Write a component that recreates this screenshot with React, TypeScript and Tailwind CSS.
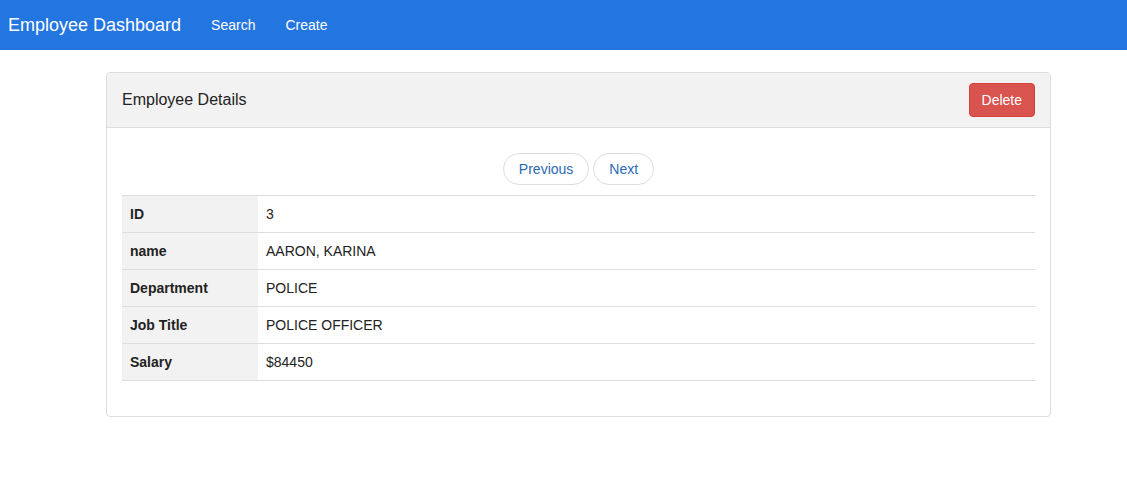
import React from 'react';

const rows: [string, string][] = [
  ['ID', '3'],
  ['name', 'AARON, KARINA'],
  ['Department', 'POLICE'],
  ['Job Title', 'POLICE OFFICER'],
  ['Salary', '$84450'],
];

export default function App() {
  return (
    <div className="min-h-screen bg-white text-[14px] text-[#333]" style={{ fontFamily: '"Liberation Sans", Arial, sans-serif' }}>
      {/* navbar */}
      <nav className="h-[50px] bg-[#2375e0] flex items-center text-white">
        <a className="ml-[8px] text-[18px] leading-[20px]">Employee Dashboard</a>
        <a className="ml-[30px] leading-[20px]">Search</a>
        <a className="ml-[30px] leading-[20px]">Create</a>
      </nav>

      <div className="ml-[106px] w-[945px] mt-[22px] border border-[#ddd] rounded-[4px]">
        <div className="h-[55px] bg-[#f2f2f2] border-b border-[#ddd] rounded-t-[4px] flex items-center justify-between pl-[15px] pr-[15px]">
          <h3 className="text-[16px] text-[#222]">Employee Details</h3>
          <button className="h-[34px] px-[12px] bg-[#d9534f] border border-[#d43f3a] rounded-[4px] text-white">Delete</button>
        </div>
        <div className="p-[15px] pt-[25px]">
          <div className="flex justify-center gap-[4px] mb-[10px]">
            <button className="h-[32px] px-[15px] border border-[#ddd] rounded-full text-[#2a6ab5]">Previous</button>
            <button className="h-[32px] px-[15px] border border-[#ddd] rounded-full text-[#2a6ab5]">Next</button>
          </div>
          <table className="w-full border-collapse mb-[20px]">
            <tbody>
              {rows.map(([k, v]) => (
                <tr key={k} className="border-t border-b border-[#ddd]">
                  <th className="w-[136px] bg-[#f2f2f2] text-left font-bold h-[37px] px-[8px] text-[#222]">{k}</th>
                  <td className="h-[37px] px-[8px] text-[#222]">{v}</td>
                </tr>
              ))}
            </tbody>
          </table>
        </div>
      </div>
    </div>
  );
}
